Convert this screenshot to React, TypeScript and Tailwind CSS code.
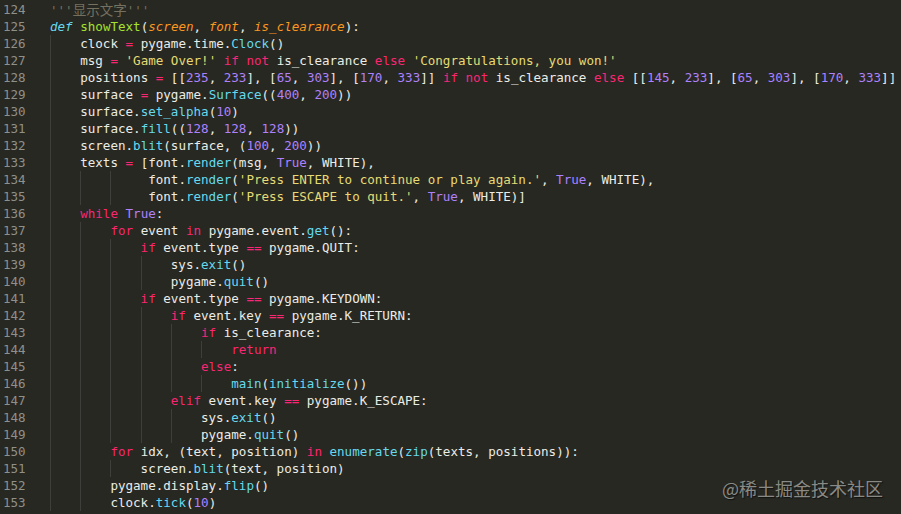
import React from "react";

type Tok = [string, string];

const W = "text-[#ecece6]";
const K = "text-[#f92672]";
const C = "text-[#66d9ef]";
const G = "text-[#a6e22e]";
const O = "text-[#fd971f] italic";
const S = "text-[#e6db74]";
const N = "text-[#ae81ff]";
const M = "text-[#75715e]";
const D = "text-[#66d9ef] italic";

const lines: { n: number; indent: number; toks: Tok[] }[] = [
  { n: 124, indent: 0, toks: [["'''", M], ["显示文字", M + " cjk"], ["'''", M]] },
  {
    n: 125,
    indent: 0,
    toks: [["def", D], [" ", W], ["showText", G], ["(", W], ["screen", O], [", ", W], ["font", O], [", ", W], ["is_clearance", O], ["):", W]],
  },
  { n: 126, indent: 4, toks: [["clock ", W], ["=", K], [" pygame.time.", W], ["Clock", C], ["()", W]] },
  {
    n: 127,
    indent: 4,
    toks: [["msg ", W], ["=", K], [" ", W], ["'Game Over!'", S], [" ", W], ["if not", K], [" is_clearance ", W], ["else", K], [" ", W], ["'Congratulations, you won!'", S]],
  },
  {
    n: 128,
    indent: 4,
    toks: [
      ["positions ", W], ["=", K], [" [[", W], ["235", N], [", ", W], ["233", N], ["], [", W], ["65", N], [", ", W], ["303", N], ["], [", W], ["170", N], [", ", W], ["333", N], ["]] ", W],
      ["if not", K], [" is_clearance ", W], ["else", K],
      [" [[", W], ["145", N], [", ", W], ["233", N], ["], [", W], ["65", N], [", ", W], ["303", N], ["], [", W], ["170", N], [", ", W], ["333", N], ["]]", W],
    ],
  },
  { n: 129, indent: 4, toks: [["surface ", W], ["=", K], [" pygame.", W], ["Surface", C], ["((", W], ["400", N], [", ", W], ["200", N], ["))", W]] },
  { n: 130, indent: 4, toks: [["surface.", W], ["set_alpha", C], ["(", W], ["10", N], [")", W]] },
  { n: 131, indent: 4, toks: [["surface.", W], ["fill", C], ["((", W], ["128", N], [", ", W], ["128", N], [", ", W], ["128", N], ["))", W]] },
  { n: 132, indent: 4, toks: [["screen.", W], ["blit", C], ["(surface, (", W], ["100", N], [", ", W], ["200", N], ["))", W]] },
  { n: 133, indent: 4, toks: [["texts ", W], ["=", K], [" [font.", W], ["render", C], ["(msg, ", W], ["True", N], [", WHITE),", W]] },
  { n: 134, indent: 13, toks: [["font.", W], ["render", C], ["(", W], ["'Press ENTER to continue or play again.'", S], [", ", W], ["True", N], [", WHITE),", W]] },
  { n: 135, indent: 13, toks: [["font.", W], ["render", C], ["(", W], ["'Press ESCAPE to quit.'", S], [", ", W], ["True", N], [", WHITE)]", W]] },
  { n: 136, indent: 4, toks: [["while", K], [" ", W], ["True", N], [":", W]] },
  { n: 137, indent: 8, toks: [["for", K], [" event ", W], ["in", K], [" pygame.event.", W], ["get", C], ["():", W]] },
  { n: 138, indent: 12, toks: [["if", K], [" event.type ", W], ["==", K], [" pygame.QUIT:", W]] },
  { n: 139, indent: 16, toks: [["sys.", W], ["exit", C], ["()", W]] },
  { n: 140, indent: 16, toks: [["pygame.", W], ["quit", C], ["()", W]] },
  { n: 141, indent: 12, toks: [["if", K], [" event.type ", W], ["==", K], [" pygame.KEYDOWN:", W]] },
  { n: 142, indent: 16, toks: [["if", K], [" event.key ", W], ["==", K], [" pygame.K_RETURN:", W]] },
  { n: 143, indent: 20, toks: [["if", K], [" is_clearance:", W]] },
  { n: 144, indent: 24, toks: [["return", K]] },
  { n: 145, indent: 20, toks: [["else", K], [":", W]] },
  { n: 146, indent: 24, toks: [["main", C], ["(", W], ["initialize", C], ["())", W]] },
  { n: 147, indent: 16, toks: [["elif", K], [" event.key ", W], ["==", K], [" pygame.K_ESCAPE:", W]] },
  { n: 148, indent: 20, toks: [["sys.", W], ["exit", C], ["()", W]] },
  { n: 149, indent: 20, toks: [["pygame.", W], ["quit", C], ["()", W]] },
  {
    n: 150,
    indent: 8,
    toks: [["for", K], [" idx, (text, position) ", W], ["in", K], [" ", W], ["enumerate", C], ["(", W], ["zip", C], ["(texts, positions)):", W]],
  },
  { n: 151, indent: 12, toks: [["screen.", W], ["blit", C], ["(text, position)", W]] },
  { n: 152, indent: 8, toks: [["pygame.display.", W], ["flip", C], ["()", W]] },
  { n: 153, indent: 8, toks: [["clock.", W], ["tick", C], ["(", W], ["10", N], [")", W]] },
];

function Indent({ n }: { n: number }) {
  const guides = Math.floor(n / 4);
  const rest = n - guides * 4;
  const items: React.ReactNode[] = [];
  for (let i = 0; i < guides; i++) {
    items.push(
      <span
        key={i}
        className="inline-block h-[17px] w-[4ch] align-top border-l border-[#3e3f3a]"
      />
    );
  }
  if (rest > 0) items.push(<span key="r">{" ".repeat(rest)}</span>);
  return <>{items}</>;
}

export default function App() {
  return (
    <div
      className="relative w-[901px] h-[514px] overflow-hidden bg-[#272822] pt-[1px]"
      style={{ fontFamily: "'DejaVu Sans Mono', 'Liberation Mono', monospace" }}
    >
      {lines.map((l) => (
        <div key={l.n} className="flex h-[17px] text-[12.55px] leading-[17px]">
          <div className="w-[50px] shrink-0 pl-[3px] text-[#8f908a]">{l.n}</div>
          <div className="whitespace-pre">
            <Indent n={l.indent} />
            {l.toks.map((t, i) =>
              t[1].includes("cjk") ? (
                <span
                  key={i}
                  className={t[1].replace(" cjk", "") + " text-[13.5px]"}
                  style={{ fontFamily: "'Noto Sans CJK SC', sans-serif" }}
                >
                  {t[0]}
                </span>
              ) : (
                <span key={i} className={t[1]}>
                  {t[0]}
                </span>
              )
            )}
          </div>
        </div>
      ))}
      <div
        className="absolute right-[18px] bottom-[15px] text-[18px] leading-[22px] text-[#8a8a85] [text-shadow:1px_1px_1px_#111]"
        style={{ fontFamily: "'Noto Sans CJK SC', 'Noto Sans', sans-serif" }}
      >
        @稀土掘金技术社区
      </div>
    </div>
  );
}
